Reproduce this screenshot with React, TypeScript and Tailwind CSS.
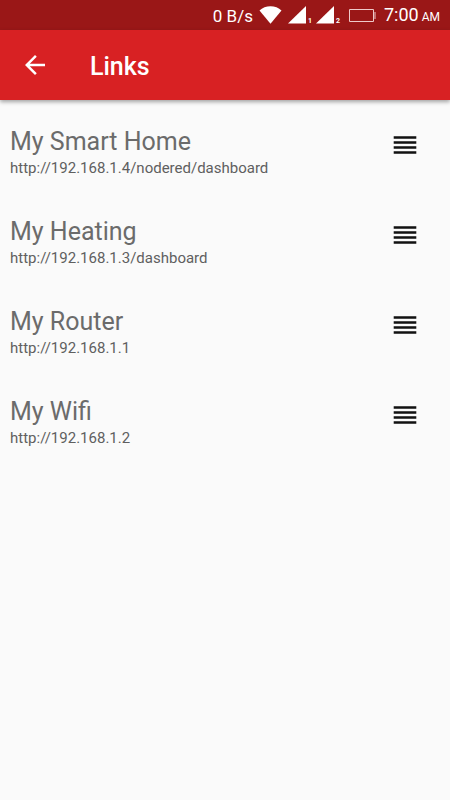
const links = [
  { name: "My Smart Home", url: "http://192.168.1.4/nodered/dashboard" },
  { name: "My Heating", url: "http://192.168.1.3/dashboard" },
  { name: "My Router", url: "http://192.168.1.1" },
  { name: "My Wifi", url: "http://192.168.1.2" },
];

function Signal({ slot }: { slot: string }) {
  return (
    <div className="flex w-7 items-end">
      <svg width="18" height="18" viewBox="0 0 18 18" fill="#fff" aria-hidden="true">
        <path d="M0 17.500L18 0v17.500z" />
      </svg>
      <span className="ml-[2px] text-[7px] font-bold leading-[6px]">{slot}</span>
    </div>
  );
}

function StatusBar() {
  return (
    <div className="flex h-[30px] items-center justify-end bg-[#9a1717] pr-[10px] text-white">
      <span className="mt-[2px] text-[17px] leading-5">0 B/s</span>
      <svg className="ml-[6px] mr-[6px]" width="23" height="18" viewBox="0 0 23 18" fill="#fff" aria-hidden="true">
        <path d="M.5 4.500C6-1.200 17-1.200 22.500 4.500L11.500 17.700z" />
      </svg>
      <Signal slot="1" />
      <Signal slot="2" />
      <svg className="ml-[5px]" width="27" height="13" viewBox="0 0 27 13" fill="none" stroke="#eec9c9" aria-hidden="true">
        <path d="M.5 .5h24v12H.5zM26 3v7" />
      </svg>
      <div className="ml-2 mt-[2px] flex items-baseline gap-[3px] leading-5">
        <span className="text-[18px]">7:00</span>
        <span className="text-[12px]">AM</span>
      </div>
    </div>
  );
}

export default function App() {
  return (
    <div className="min-h-screen bg-[#fafafa] font-['Roboto',sans-serif]">
      <StatusBar />
      <header className="flex h-[70px] items-center bg-[#d82123] pl-[25px] text-white shadow-[0_2px_4px_rgba(0,0,0,0.35)]">
        <button type="button" aria-label="Back" className="flex size-5 items-center">
          <svg width="20" height="20" viewBox="4 4 16 16" fill="#fff" aria-hidden="true">
            <path d="M20 11H7.830l5.590-5.590L12 4l-8 8 8 8 1.410-1.410L7.830 13H20z" />
          </svg>
        </button>
        <h1 className="ml-[45px] pt-[3px] text-[25px] font-medium leading-8">Links</h1>
      </header>
      <ul className="pt-[10px]">
        {links.map((l) => (
          <li key={l.name} className="flex h-[90px] justify-between pl-[10px] pr-[33px] pt-4">
            <a href={l.url} className="block">
              <span className="block text-[25px] leading-8 text-[#6b6b6b]">{l.name}</span>
              <span className="block text-[15px] leading-5 text-[#5f5f5f]">{l.url}</span>
            </a>
            <button type="button" aria-label={`Reorder ${l.name}`} className="mt-[10px] h-[18px] w-6">
              <svg width="24" height="18" viewBox="0 0 24 18" fill="#111" aria-hidden="true">
                <path d="M.7 .2h22.600v2.600H.7zM.7 5.200h22.600v2.600H.7zM.7 10.200h22.600v2.600H.7zM.7 15.200h22.600v2.600H.7z" />
              </svg>
            </button>
          </li>
        ))}
      </ul>
    </div>
  );
}
